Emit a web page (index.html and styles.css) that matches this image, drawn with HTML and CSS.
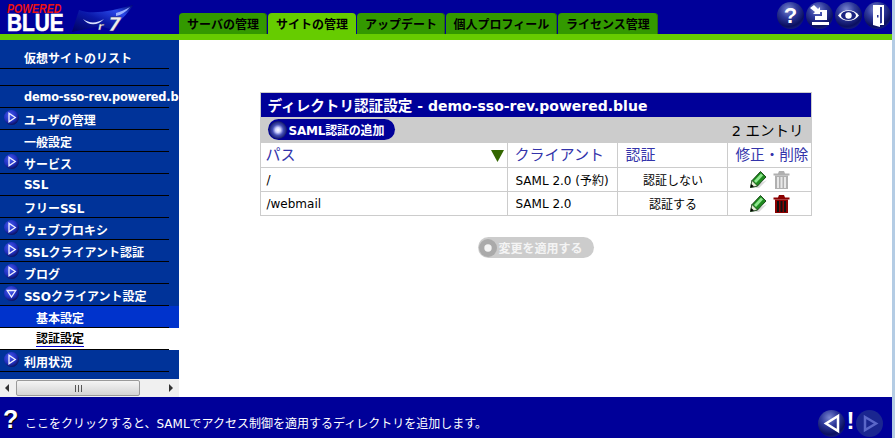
FILE: index.html
```html
<!DOCTYPE html>
<html lang="ja">
<head>
<meta charset="utf-8">
<title>Powered Blue</title>
<link rel="stylesheet" href="styles.css">
</head>
<body>
<svg class="defs" width="0" height="0" aria-hidden="true">
  <defs>
    <radialGradient id="orb" cx="42%" cy="28%" r="78%">
      <stop offset="0" stop-color="#7a86d0"/>
      <stop offset="0.4" stop-color="#2f3a9c"/>
      <stop offset="0.8" stop-color="#0a0f60"/>
      <stop offset="1" stop-color="#1a2288"/>
    </radialGradient>
    <radialGradient id="bul" cx="40%" cy="35%" r="70%">
      <stop offset="0" stop-color="#4a5cf0"/>
      <stop offset="0.6" stop-color="#2030c0"/>
      <stop offset="1" stop-color="#080c50"/>
    </radialGradient>
    <radialGradient id="dot" cx="50%" cy="50%" r="50%">
      <stop offset="0" stop-color="#ffffff"/>
      <stop offset="0.28" stop-color="#d0d4ff"/>
      <stop offset="0.6" stop-color="#4650b8"/>
      <stop offset="1" stop-color="#12186a"/>
    </radialGradient>
    <linearGradient id="swoosh" x1="0" y1="1" x2="1" y2="0">
      <stop offset="0" stop-color="#000060"/>
      <stop offset="0.45" stop-color="#0a18a8"/>
      <stop offset="0.75" stop-color="#2a48e8"/>
      <stop offset="1" stop-color="#000a70"/>
    </linearGradient>
    <symbol id="arrow-right" viewBox="0 0 15 15">
      <circle cx="7.5" cy="7.5" r="7.5" fill="url(#bul)"/>
      <path d="M5 3.2 L11.3 7.5 L5 11.8 Z" fill="none" stroke="#f0f0ff" stroke-width="1.3"/>
    </symbol>
    <symbol id="arrow-down" viewBox="0 0 15 15">
      <circle cx="7.5" cy="7.5" r="7.5" fill="url(#bul)"/>
      <path d="M3.2 4.5 L11.8 4.5 L7.5 11 Z" fill="none" stroke="#f0f0ff" stroke-width="1.3"/>
    </symbol>
    <symbol id="pencil" viewBox="0 0 17 17">
      <path d="M2 16.500 L17 9 L9 17 Z" fill="#d8d8d8"/>
      <path d="M0.500 16.500 L2 9.500 L10.500 0.500 L16 6 L7.500 15 Z" fill="#1f8a1f" stroke="#083008" stroke-width="0.8"/>
      <path d="M4 10 L11 2.500 L13 4.500 L6 12 Z" fill="#8fe88f"/>
      <path d="M0.500 16.500 L2 9.500 L7.500 15 Z" fill="#e8f0d8" stroke="#083008" stroke-width="0.6"/>
      <path d="M0.500 16.500 L1.300 13 L4 15.500 Z" fill="#000"/>
    </symbol>
    <symbol id="trash" viewBox="0 0 17 19">
      <path d="M0.500 3.500 L5 3.500 L6 1 L11 1 L12 3.500 L16.500 3.500 L16.500 5.500 L0.500 5.500 Z" fill="currentColor"/>
      <rect x="2" y="5.500" width="13" height="13.500" fill="currentColor"/>
      <rect x="4" y="7" width="2" height="11" fill="var(--slot)"/>
      <rect x="7.500" y="7" width="2" height="11" fill="var(--slot)"/>
      <rect x="11" y="7" width="2" height="11" fill="var(--slot)"/>
    </symbol>
  </defs>
</svg>

<div class="page">
  <header class="top">
    <div class="logo">
      <div class="logo-words">
        <span class="logo-powered">POWERED</span>
        <span class="logo-blue">BLUE</span>
      </div>
      <svg class="logo-mark" width="61" height="29" viewBox="0 0 61 29">
        <path d="M0 27 L7 5 C20 10 40 6 61 0 C55 10 46 18 38 24 L28 21 L14 24 Z" fill="url(#swoosh)"/>
        <path d="M11 14 C18 19 25 18 32 14 C26 21 16 21 11 14 Z" fill="#d8e0ff"/>
        <path d="M44 8 C48 7 53 5 58 2 C54 7 49 10 44 11 Z" fill="#9ab0ff"/>
        <text x="26" y="25" class="logo-r">r</text>
        <text x="36" y="26" class="logo-seven">7</text>
      </svg>
    </div>
    <nav class="tabs">
      <a class="tab">サーバの管理</a>
      <a class="tab tab-on">サイトの管理</a>
      <a class="tab">アップデート</a>
      <a class="tab">個人プロフィール</a>
      <a class="tab">ライセンス管理</a>
    </nav>
    <div class="tools">
      <svg class="tool" viewBox="0 0 27 27"><circle cx="13.500" cy="13.500" r="13.500" fill="url(#orb)"/><text x="13.500" y="21" class="tool-q">?</text></svg>
      <svg class="tool" viewBox="0 0 27 27"><circle cx="13.500" cy="13.500" r="13.500" fill="url(#orb)"/><path d="M4 6 L8 3 L12 7 L14 5 L14 12 L7 12 L9 10 Z" fill="#fff"/><path d="M13 8 H21 V18 H9 V14 H16 V10 H13 Z" fill="#fff"/><rect x="6" y="20" width="17" height="3" fill="#fff"/></svg>
      <svg class="tool" viewBox="0 0 27 27"><circle cx="13.500" cy="13.500" r="13.500" fill="url(#orb)"/><path d="M3 13.500 C8 6.500 19 6.500 24 13.500 C19 20.500 8 20.500 3 13.500 Z" fill="#fff"/><ellipse cx="13.500" cy="13.500" rx="7.500" ry="4.500" fill="#1a2280"/><circle cx="13.500" cy="13.500" r="3.200" fill="#fff"/></svg>
      <svg class="tool" viewBox="0 0 27 27"><circle cx="13.500" cy="13.500" r="13.500" fill="url(#orb)"/><path d="M9 3 H20 V23 H9 Z" fill="#fff"/><path d="M11 5 H18 V21 L11 23 Z" fill="#2a3596"/><path d="M9 3 L16 5 V25 L9 23 Z" fill="#fff"/><rect x="13" y="13" width="1.500" height="2.500" fill="#2a3596"/></svg>
    </div>
  </header>
  <div class="greenbar"></div>

  <div class="middle">
    <aside class="side">
      <div class="menu">
        <div class="row row-head"><div class="line">仮想サイトのリスト</div></div>
        <div class="row row-blank"><div class="line"></div></div>
        <div class="row row-demo"><div class="line">demo-sso-rev.powered.blue</div></div>
        <div class="row"><div class="line"><svg class="bullet"><use href="#arrow-right"/></svg>ユーザの管理</div></div>
        <div class="row"><div class="line">一般設定</div></div>
        <div class="row"><div class="line"><svg class="bullet"><use href="#arrow-right"/></svg>サービス</div></div>
        <div class="row"><div class="line">SSL</div></div>
        <div class="row"><div class="line">フリーSSL</div></div>
        <div class="row"><div class="line"><svg class="bullet"><use href="#arrow-right"/></svg>ウェブプロキシ</div></div>
        <div class="row"><div class="line"><svg class="bullet"><use href="#arrow-right"/></svg>SSLクライアント認証</div></div>
        <div class="row"><div class="line"><svg class="bullet"><use href="#arrow-right"/></svg>ブログ</div></div>
        <div class="row"><div class="line"><svg class="bullet"><use href="#arrow-down"/></svg>SSOクライアント設定</div></div>
        <div class="row row-sub"><div class="line">基本設定</div></div>
        <div class="row row-sub row-cur"><div class="line"><span class="cur-text">認証設定</span></div></div>
        <div class="row"><div class="line"><svg class="bullet"><use href="#arrow-right"/></svg>利用状況</div></div>
      </div>
      <div class="hscroll">
        <span class="sb-arrow sb-left"></span>
        <div class="sb-thumb"><span class="sb-grip"></span></div>
        <span class="sb-arrow sb-right"></span>
      </div>
    </aside>

    <main class="content">
      <table class="panel">
        <colgroup>
          <col class="c1"><col class="c2"><col class="c3"><col class="c4">
        </colgroup>
        <thead>
          <tr class="panel-title"><th colspan="4"><span class="title-ja">ディレクトリ認証設定</span> - demo-sso-rev.powered.blue</th></tr>
          <tr class="panel-bar">
            <th colspan="4">
              <div class="bar-in">
                <a class="pill"><svg class="pill-dot" viewBox="0 0 17 17"><circle cx="8.500" cy="8.500" r="8.500" fill="url(#dot)"/></svg>SAML認証の追加</a>
                <span class="count">2 エントリ</span>
              </div>
            </th>
          </tr>
          <tr class="panel-head">
            <th><div class="sort-cell">パス<svg class="sort" width="13" height="12" viewBox="0 0 13 12"><path d="M0 0 H13 L6.500 12 Z" fill="#336600"/></svg></div></th>
            <th class="head-client">クライアント</th>
            <th class="head-auth">認証</th>
            <th class="act-head">修正・削除</th>
          </tr>
        </thead>
        <tbody>
          <tr>
            <td>/</td>
            <td>SAML 2.0 (予約)</td>
            <td class="mid">認証しない</td>
            <td class="mid"><div class="acts"><svg class="act-pen"><use href="#pencil"/></svg><svg class="act-bin trash-off"><use href="#trash"/></svg></div></td>
          </tr>
          <tr>
            <td>/webmail</td>
            <td>SAML 2.0</td>
            <td class="mid">認証する</td>
            <td class="mid"><div class="acts"><svg class="act-pen"><use href="#pencil"/></svg><svg class="act-bin trash-on"><use href="#trash"/></svg></div></td>
          </tr>
        </tbody>
      </table>
      <a class="apply"><svg class="pill-dot" viewBox="0 0 17 17"><circle cx="8.500" cy="8.500" r="8.500" fill="#aaaaaa"/><circle cx="8.500" cy="8.500" r="3.500" fill="#f4f4f4"/></svg>変更を適用する</a>
    </main>
  </div>

  <footer class="foot">
    <span class="foot-q">?</span>
    <span class="foot-msg">ここをクリックすると、SAMLでアクセス制御を適用するディレクトリを追加します。</span>
    <div class="foot-nav">
      <svg class="nav-orb" viewBox="0 0 27 27"><circle cx="13.500" cy="13.500" r="13.500" fill="url(#orb)"/><path d="M20 6 L8 13.500 L20 21 Z" fill="none" stroke="#fff" stroke-width="2.500"/></svg>
      <span class="nav-bang">!</span>
      <svg class="nav-orb" viewBox="0 0 27 27"><circle cx="13.500" cy="13.500" r="13.500" fill="#1a2690"/><path d="M9 7 L20 13.500 L9 20 Z" fill="none" stroke="#5a66c8" stroke-width="2.500"/></svg>
    </div>
  </footer>
</div>
</body>
</html>
```

FILE: styles.css
```css
* { box-sizing: border-box; }
html, body { margin: 0; padding: 0; }
body {
  width: 895px;
  height: 438px;
  overflow: hidden;
  font-family: "DejaVu Sans", "Noto Sans CJK JP", sans-serif;
  font-size: 12px;
}
.defs { display: block; height: 0; width: 0; overflow: hidden; }
.page {
  width: 895px;
  height: 438px;
  display: flex;
  flex-direction: column;
  border-right: 3px solid #b4cce4;
  background: #fff;
}

/* header */
.top {
  height: 34px;
  background: #000099;
  display: flex;
  align-items: flex-end;
}
.logo {
  width: 179px;
  height: 34px;
  flex: none;
  display: flex;
  align-items: flex-start;
  padding: 3px 0 0 7px;
  gap: 8px;
}
.logo-words {
  display: flex;
  flex-direction: column;
  width: 57px;
  flex: none;
}
.logo-powered {
  font: italic bold 12.500px/12px "Liberation Sans", sans-serif;
  color: #ee1111;
  white-space: nowrap;
  transform: scaleX(0.84);
  transform-origin: left center;
}
.logo-blue {
  font: bold 23.600px/17px "Liberation Sans", sans-serif;
  color: #fff;
  white-space: nowrap;
  -webkit-text-stroke: 0.6px #fff;
  transform: scaleX(0.88);
  transform-origin: left center;
}
.logo-mark { flex: none; margin-top: 2px; }
.logo-r, .logo-seven {
  font-family: "DejaVu Sans", sans-serif;
  font-style: italic;
  font-weight: bold;
  fill: #eeeeee;
  stroke: #333366;
  stroke-width: 0.3px;
}
.logo-r { font-size: 11px; }
.logo-seven { font-size: 19px; }
.tabs {
  display: flex;
  height: 21px;
  gap: 1px;
}
.tab {
  display: flex;
  align-items: center;
  justify-content: center;
  height: 21px;
  padding-top: 1px;
  background: #339900;
  color: #000;
  border-radius: 4px 4px 0 0;
  font: bold 12px/1 "Noto Sans CJK JP", sans-serif;
  width: 88px;
  box-shadow: inset -1px 0 0 #2a6a10;
}
.tab:nth-child(4) { width: 111px; }
.tab:nth-child(5) { width: 100px; }
.tab-on { background: #66cc00; box-shadow: none; }
.tools {
  margin-left: auto;
  align-self: flex-start;
  margin-top: 2px;
  display: flex;
  gap: 2px;
  padding-right: 1px;
}
.tool { width: 27px; height: 27px; display: block; }
.tool-q {
  font: bold 22px "Liberation Sans", sans-serif;
  fill: #fff;
  text-anchor: middle;
}
.greenbar { height: 6px; background: #66cc00; flex: none; }

/* middle */
.middle {
  flex: 1;
  display: flex;
  min-height: 0;
}
.side {
  width: 179px;
  flex: none;
  display: flex;
  flex-direction: column;
  background: #003399;
}
.menu { flex: 1; overflow: hidden; }
.row {
  height: 22px;
  overflow: hidden;
  color: #fff;
  font-weight: bold;
  white-space: nowrap;
}
.line {
  width: 169px;
  height: 22px;
  padding: 1px 0 0 24px;
  display: flex;
  align-items: center;
  border-bottom: 1px solid #000;
  box-shadow: 0 1px 0 #3366cc;
  position: relative;
}
.row-head { height: 29px; }
.row-head .line { height: 29px; padding: 7px 0 0 24px; }
.row-blank { height: 17px; }
.row-blank .line { height: 17px; }
.row-demo { font-size: 11.400px; letter-spacing: -0.2px; }
.row-sub .line { padding-left: 36px; box-shadow: none; }
.row-sub { background: #0033cc; }
.row-cur { background: #fff; color: #000; }
.cur-text { border-bottom: 1px solid #0000cc; line-height: 14px; }
.bullet {
  position: absolute;
  left: 4px;
  top: 2px;
  width: 15px;
  height: 15px;
}
.hscroll {
  height: 18px;
  flex: none;
  background: #f0f0f0;
  display: flex;
  align-items: center;
  padding: 0 4px;
}
.sb-arrow { width: 0; height: 0; border-style: solid; border-color: transparent; flex: none; }
.sb-left { border-width: 4px 4px 4px 0; border-right-color: #333; margin-left: 1px; }
.sb-right { border-width: 4px 0 4px 4px; border-left-color: #333; margin-left: auto; margin-right: 2px; }
.sb-thumb {
  width: 124px;
  height: 16px;
  margin-left: 7px;
  border: 1px solid #9a9a9a;
  border-radius: 2px;
  background: linear-gradient(#f4f4f4, #d4d4d4);
  display: flex;
  align-items: center;
  justify-content: center;
}
.sb-grip {
  width: 7px;
  height: 7px;
  background: repeating-linear-gradient(90deg, #555 0 1px, transparent 1px 3px);
}

/* content */
.content {
  flex: 1;
  padding-top: 52px;
  display: flex;
  flex-direction: column;
  align-items: center;
}
.panel {
  width: 550px;
  margin-left: 1px;
  border-collapse: collapse;
  table-layout: fixed;
  border: 1px solid #cccccc;
  color: #000;
}
.c1 { width: 247px; }
.c2 { width: 110px; }
.c3 { width: 110px; }
.c4 { width: 83px; }
.panel-title th {
  background: #000099;
  color: #fff;
  height: 24px;
  padding: 0 0 0 6px;
  text-align: left;
  font-size: 14px;
  font-weight: bold;
  white-space: nowrap;
}
.title-ja { font-size: 14.600px; }
.panel-bar th {
  background: #cccccc;
  height: 26px;
  padding: 0 7px 0 7px;
  font-weight: normal;
}
.bar-in { display: flex; align-items: center; justify-content: space-between; }
.pill {
  display: flex;
  align-items: center;
  height: 21px;
  width: 127px;
  padding-left: 1px;
  gap: 1px;
  border-radius: 11px;
  background: #000099;
  color: #fff;
  font-size: 12px;
  font-weight: bold;
  letter-spacing: -0.2px;
}
.pill-dot { width: 18px; height: 18px; flex: none; }
.count { font-size: 14.500px; }
.panel-head th {
  height: 25px;
  padding: 0 4px 2px;
  text-align: left;
  color: #3333aa;
  font-size: 15px;
  font-weight: normal;
  border: 1px solid #cccccc;
  border-top: 0;
}
.panel-head .head-client { padding-left: 6px; }
.panel-head .head-auth { padding-left: 7px; }
.panel-head .act-head { padding: 0 0 2px 7px; font-size: 14.600px; white-space: nowrap; }
.sort-cell { display: flex; align-items: center; justify-content: space-between; margin-right: -1px; }
.sort { margin-top: 4px; }
.panel td {
  height: 24px;
  padding: 0 7px;
  border: 1px solid #cccccc;
}
.panel td:first-child { padding-left: 5px; }
.panel td.mid { text-align: center; padding: 0; }
.acts { display: flex; justify-content: center; align-items: flex-end; gap: 6px; }
.act-pen { width: 17px; height: 17px; display: block; margin-bottom: 1px; }
.act-bin { width: 17px; height: 19px; display: block; }
.trash-off { color: #b0b0b0; --slot: #e8e8e8; }
.trash-on { color: #8b0000; --slot: #111; }

.apply {
  margin-top: 21px;
  display: flex;
  align-items: center;
  width: 116px;
  height: 21px;
  padding-left: 1px;
  gap: 2px;
  background: #cccccc;
  border-radius: 11px;
  color: #f4f4f4;
  font-weight: bold;
  font-size: 12px;
}

/* footer */
.foot {
  height: 41px;
  flex: none;
  background: #000099;
  color: #fff;
  display: flex;
  align-items: center;
  padding-left: 3px;
}
.foot-q {
  width: 22px;
  font: bold 25px/1 "Liberation Sans", sans-serif;
  text-shadow: 1px 1px 0 #000;
  margin-top: 3px;
}
.foot-msg { font-size: 12px; margin-top: 10px; }
.foot-nav {
  margin-left: auto;
  display: flex;
  align-items: center;
  padding-right: 9px;
  margin-top: 11px;
}
.nav-orb { width: 27px; height: 27px; display: block; }
.nav-bang {
  font: bold 24px/1 "Liberation Sans", sans-serif;
  width: 11px;
  text-align: center;
  margin-top: -4px;
}
```
